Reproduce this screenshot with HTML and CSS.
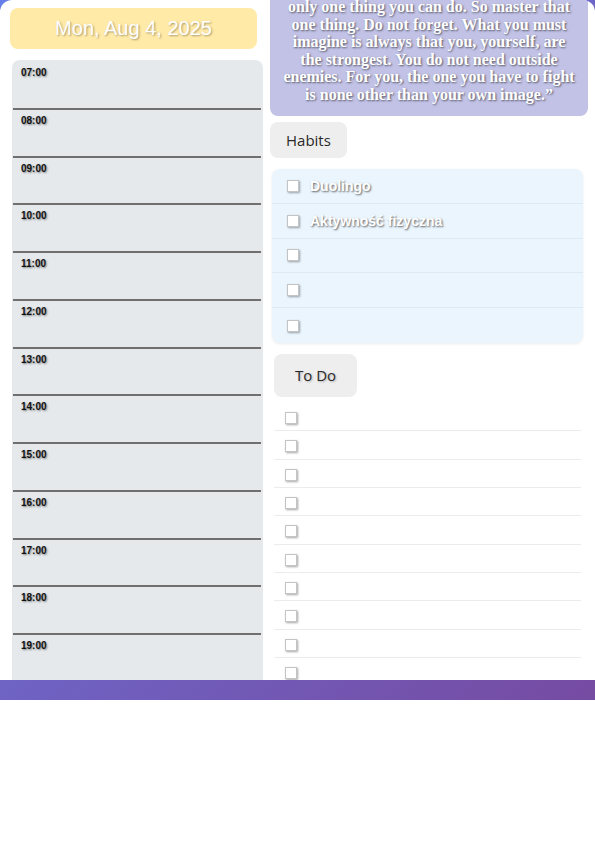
FILE: index.html
```html
<!DOCTYPE html>
<html>
<head>
<meta charset="utf-8">
<link rel="stylesheet" href="styles.css">
</head>
<body>
<div class="frame">
  <div class="sheet">
    <div class="left">
      <div class="date-card">Mon, Aug 4, 2025</div>
      <div class="schedule">
        <div class="slot"><span class="hour">07:00</span></div>
        <div class="slot"><span class="hour">08:00</span></div>
        <div class="slot"><span class="hour">09:00</span></div>
        <div class="slot"><span class="hour">10:00</span></div>
        <div class="slot"><span class="hour">11:00</span></div>
        <div class="slot"><span class="hour">12:00</span></div>
        <div class="slot"><span class="hour">13:00</span></div>
        <div class="slot"><span class="hour">14:00</span></div>
        <div class="slot"><span class="hour">15:00</span></div>
        <div class="slot"><span class="hour">16:00</span></div>
        <div class="slot"><span class="hour">17:00</span></div>
        <div class="slot"><span class="hour">18:00</span></div>
        <div class="slot"><span class="hour">19:00</span></div>
      </div>
    </div>
    <div class="right">
      <div class="quote">only one thing you can do. So master that one thing. Do not forget. What you must imagine is always that you, yourself, are the strongest. You do not need outside enemies. For you, the one you have to fight is none other than your own image.”</div>
      <div class="tab tab-habits">Habits</div>
      <div class="habits">
        <div class="habit"><span class="box"></span><span class="habit-name">Duolingo</span></div>
        <div class="habit"><span class="box"></span><span class="habit-name">Aktywność fizyczna</span></div>
        <div class="habit"><span class="box"></span></div>
        <div class="habit"><span class="box"></span></div>
        <div class="habit last"><span class="box"></span></div>
      </div>
      <div class="tab tab-todo">To Do</div>
      <div class="todos">
        <div class="todo"><span class="box"></span></div>
        <div class="todo"><span class="box"></span></div>
        <div class="todo"><span class="box"></span></div>
        <div class="todo"><span class="box"></span></div>
        <div class="todo"><span class="box"></span></div>
        <div class="todo"><span class="box"></span></div>
        <div class="todo"><span class="box"></span></div>
        <div class="todo"><span class="box"></span></div>
        <div class="todo"><span class="box"></span></div>
        <div class="todo"><span class="box"></span></div>
      </div>
    </div>
  </div>
</div>
</body>
</html>
```

FILE: styles.css
```css
html, body {
  margin: 0;
  padding: 0;
  background: #ffffff;
}

.frame {
  width: 595px;
  height: 700px;
  background: linear-gradient(135deg, #667eea 0%, #764ba2 100%);
  padding-bottom: 20px;
  box-sizing: border-box;
}

.sheet {
  height: 680px;
  background: #ffffff;
  border-radius: 12px 12px 0 0;
  overflow: hidden;
  display: grid;
  grid-template-columns: 254px 318px;
  column-gap: 8px;
  padding: 0 7px 0 8px;
  box-sizing: border-box;
}

.left {
  display: flex;
  flex-direction: column;
  padding-top: 8px;
  min-height: 0;
}

.date-card {
  flex: none;
  margin: 0 5px 0 2px;
  height: 41px;
  background: #ffeaa7;
  border-radius: 8px;
  display: flex;
  align-items: center;
  justify-content: center;
  font-family: "Liberation Sans", Arial, sans-serif;
  font-size: 20px;
  color: #ffffff;
  text-shadow: 1px 1px 2px rgba(0, 0, 0, 0.35);
}

.schedule {
  flex: none;
  margin: 11px -1px 0 4px;
  background: #e5e9ec;
  border-radius: 8px 8px 0 0;
  padding-top: 2px;
}

.slot {
  height: 47.75px;
  box-sizing: border-box;
  margin: 0 2px 0 1px;
  border-bottom: 2px solid #6f6f6f;
  padding: 5px 0 0 8px;
  font-size: 10px;
  line-height: 12px;
}

.hour {
  display: block;
  font-family: "Liberation Sans", Arial, sans-serif;
  font-weight: bold;
  font-size: 10px;
  line-height: 12px;
  color: #111111;
  text-shadow: 1px 1px 2px rgba(0, 0, 0, 0.45);
}

.right {
  display: flex;
  flex-direction: column;
  align-items: flex-start;
  min-height: 0;
  overflow: hidden;
}

.quote {
  flex: none;
  align-self: stretch;
  margin-top: -2px;
  background: #c1c2e6;
  border-radius: 0 0 8px 8px;
  padding: 0 12px 13px;
  font-family: "Liberation Serif", "Times New Roman", serif;
  font-weight: bold;
  font-size: 16px;
  line-height: 17.5px;
  text-align: center;
  color: #ffffff;
  text-shadow: 1px 1px 2px rgba(0, 0, 0, 0.55);
}

.tab {
  flex: none;
  background: #eeeeee;
  border-radius: 8px;
  font-family: "Open Sans", "Noto Sans", sans-serif;
  font-size: 15px;
  color: #2a2a2a;
  box-sizing: border-box;
  display: flex;
  align-items: center;
}

.tab-habits {
  margin-top: 6px;
  height: 36px;
  width: 77px;
  padding-left: 16px;
}

.tab-todo {
  margin: 11px 0 0 4px;
  height: 43px;
  width: 83px;
  padding-left: 21px;
  text-shadow: 1px 1px 2px rgba(0, 0, 0, 0.25);
}

.habits {
  flex: none;
  align-self: stretch;
  margin: 11px 5px 0 2px;
  background: #eaf5fe;
  border-radius: 8px;
  box-shadow: 0 1px 3px rgba(0, 0, 0, 0.08);
}

.habit {
  height: 34.8px;
  box-sizing: border-box;
  border-bottom: 1px solid #dde9f3;
  display: flex;
  align-items: center;
  padding-left: 15px;
  gap: 11px;
}

.habit.last {
  border-bottom: none;
}

.habit-name {
  font-family: "Liberation Sans", Arial, sans-serif;
  font-weight: bold;
  font-size: 14px;
  color: #ffffff;
  text-shadow: 1px 1px 2px rgba(0, 0, 0, 0.6);
}

.box {
  width: 10px;
  height: 10px;
  flex: none;
  background: #ffffff;
  border: 1px solid #c4c4c4;
  box-shadow: 1px 1px 2px rgba(0, 0, 0, 0.35);
}

.todos {
  flex: none;
  align-self: stretch;
  margin: 6px 7px 0 4px;
}

.todo {
  height: 28.33px;
  box-sizing: border-box;
  border-bottom: 1px solid #ececec;
  display: flex;
  align-items: center;
  padding: 3px 0 0 11px;
}
```
